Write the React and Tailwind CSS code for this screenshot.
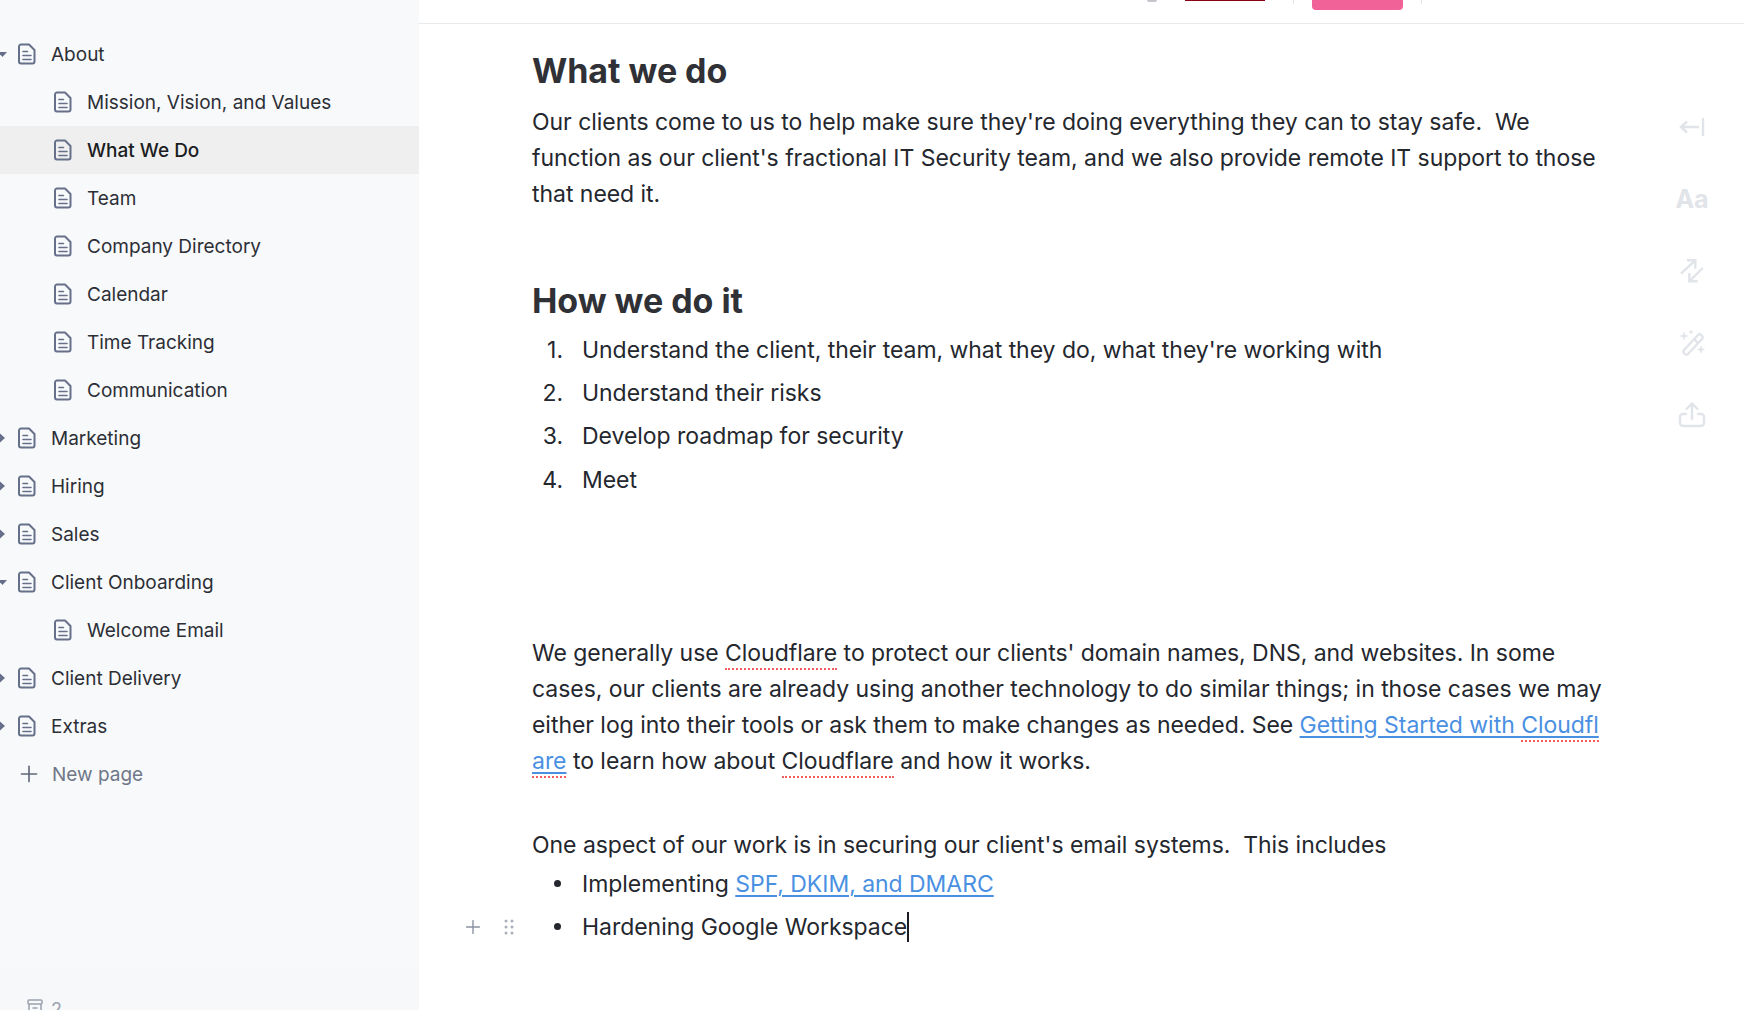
import React from 'react';
import { Plus } from 'lucide-react';

function DocIcon() {
  return (
    <svg width="18" height="22" viewBox="0 0 18 22" fill="none" stroke="#66708a" strokeWidth="2" strokeLinejoin="round" strokeLinecap="round" className="shrink-0">
      <path d="M3 1.5h8l5.5 5.5v11.5a2 2 0 0 1-2 2H3a2 2 0 0 1-2-2v-15a2 2 0 0 1 2-2z" />
      <path d="M5 8.5h4.5M5 12.5h8M5 16.5h8" strokeWidth="1.6" />
    </svg>
  );
}

function Caret({ open }) {
  return (
    <svg width="8" height="10" viewBox="0 0 8 10" className="absolute left-0 top-1/2 -translate-y-1/2" fill="#66708a">
      {open ? <path d="M-2 3h9L2.5 8z" /> : <path d="M0 0.5L5 5 0 9.5z" />}
    </svg>
  );
}

const pages = [
  { label: 'About', caret: 'open' },
  { label: 'Mission, Vision, and Values', child: true },
  { label: 'What We Do', child: true, active: true },
  { label: 'Team', child: true },
  { label: 'Company Directory', child: true },
  { label: 'Calendar', child: true },
  { label: 'Time Tracking', child: true },
  { label: 'Communication', child: true },
  { label: 'Marketing', caret: 'closed' },
  { label: 'Hiring', caret: 'closed' },
  { label: 'Sales', caret: 'closed' },
  { label: 'Client Onboarding', caret: 'open' },
  { label: 'Welcome Email', child: true },
  { label: 'Client Delivery', caret: 'closed' },
  { label: 'Extras', caret: 'closed' },
];

function Sidebar() {
  return (
    <aside className="w-[419px] shrink-0 h-full bg-[#f8f9fb] flex flex-col overflow-hidden">
      <nav className="pt-[30px] flex-1">
        {pages.map((p) => (
          <div
            key={p.label}
            className={`relative h-12 flex items-center gap-[15px] text-[19px] ${p.child ? 'pl-[54px]' : 'pl-[18px]'} ${p.active ? 'bg-[#efefef] text-[#1b1d22] font-medium' : 'text-[#2c2f36]'}`}
          >
            {p.caret && <Caret open={p.caret === 'open'} />}
            <DocIcon />
            <span className="pt-[2px]">{p.label}</span>
          </div>
        ))}
        <div className="h-12 flex items-center pl-[16px] gap-[10px] text-[19px] text-[#6f7787]">
          <Plus size={26} strokeWidth={1.5} className="text-[#5f6779] shrink-0" />
          <span className="pt-[2px]">New page</span>
        </div>
      </nav>
      <footer className="h-[43px] shrink-0 bg-[#f7f8fa] pt-[31px] pl-[27px] flex items-start gap-2 text-[18px] leading-[24px] text-[#9aa1ae]">
        <svg width="16" height="18" viewBox="0 0 16 18" fill="none" stroke="#9aa1ae" strokeWidth="1.5" className="mt-[1px]">
          <rect x="1" y="1" width="14" height="4" rx="1" />
          <path d="M2 5v10h12V5M5.5 9h5" />
        </svg>
        <span>2</span>
      </footer>
    </aside>
  );
}

function TopBar() {
  return (
    <header className="h-6 shrink-0 border-b border-[#e8ebed] flex items-start">
      <div className="ml-[728px] w-[10px] h-[2px] rounded-b-full bg-[#c4c6cb]" />
      <div className="ml-[28px] w-[80px] h-[1px] bg-[#8b0015]" />
      <div className="ml-[28px] w-[1px] h-1 bg-[#e2e4ea]" />
      <div className="ml-[18px] w-[91px] h-[10px] rounded-b-[4px] bg-[#f06298]" />
      <div className="ml-[18px] w-[1px] h-1 bg-[#e2e4ea]" />
    </header>
  );
}

function Squiggle({ children }) {
  return <span className="border-b-2 border-dotted border-[#f25c5c] pb-[1px]">{children}</span>;
}

function Doc() {
  const link = 'text-[#4a90e2] underline decoration-2 underline-offset-[3px]';
  return (
    <article className="flex-1 min-w-0 pl-[113px] pr-[34px] font-['Inter',sans-serif] text-[23px] leading-[36px] tracking-[-0.04px] text-[#24272e] relative">
      <h1 className="mt-[25px] text-[34px] leading-[44px] font-bold text-[#2f3136]">What we do</h1>
      <p className="mt-[11px]">
        Our clients come to us to help make sure they're doing everything they can to stay safe.&nbsp; We function as our client's fractional IT Security team, and we also provide remote IT support to those that need it.
      </p>
      <h2 className="mt-[67px] text-[34px] leading-[44px] font-bold text-[#2f3136]">How we do it</h2>
      <ol className="mt-[5px]">
        {["Understand the client, their team, what they do, what they're working with", 'Understand their risks', 'Develop roadmap for security', 'Meet'].map((t, i) => (
          <li key={t} className="flex h-[43.4px] items-center">
            <span className="w-[50px] pr-[19px] text-right shrink-0">{i + 1}.</span>
            <span>{t}</span>
          </li>
        ))}
      </ol>
      <p className="mt-[133px]">
        We generally use <Squiggle>Cloudflare</Squiggle> to protect our clients' domain names, DNS, and websites. In some cases, our clients are already using another technology to do similar things; in those cases we may either log into their tools or ask them to make changes as needed. See{' '}
        <a className={`${link} break-all`}>Getting Started with <Squiggle>Cloudflare</Squiggle></a> to learn how about <Squiggle>Cloudflare</Squiggle> and how it works.
      </p>
      <p className="mt-[48px]">One aspect of our work is in securing our client's email systems.&nbsp; This includes</p>
      <ul>
        <li className="flex h-[42.5px] items-center">
          <span className="w-[50px] flex justify-center shrink-0"><span className="w-[7px] h-[7px] rounded-full bg-[#24272e]" /></span>
          <span>Implementing <a className={link}>SPF, DKIM, and DMARC</a></span>
        </li>
        <li className="relative flex h-[43.4px] items-center">
          <div className="absolute left-[-70px] top-1/2 -translate-y-1/2 flex items-center gap-[20px] text-[#8a91a0]">
            <Plus size={22} strokeWidth={1.5} />
            <svg width="10" height="16" viewBox="0 0 10 16" fill="#a9afbb">
              <circle cx="2" cy="2" r="1.5" /><circle cx="8" cy="2" r="1.5" />
              <circle cx="2" cy="8" r="1.5" /><circle cx="8" cy="8" r="1.5" />
              <circle cx="2" cy="14" r="1.5" /><circle cx="8" cy="14" r="1.5" />
            </svg>
          </div>
          <span className="w-[50px] flex justify-center shrink-0"><span className="w-[7px] h-[7px] rounded-full bg-[#24272e]" /></span>
          <span className="border-r-2 border-[#1b1d22] leading-[30px]">Hardening Google Workspace</span>
        </li>
      </ul>
    </article>
  );
}

function Rail() {
  const c = '#e1e4e9';
  return (
    <div className="w-[106px] shrink-0 flex flex-col items-center pt-[89px] pl-[2px] gap-[44px] text-[#e1e4e9]">
      <svg width="28" height="28" viewBox="0 0 28 28" fill="none" stroke={c} strokeWidth="2.4">
        <path d="M25 5v18M21 14H3M9 8.5L3 14l6 5.5" />
      </svg>
      <div className="h-7 flex items-center font-['Inter',sans-serif] text-[25px] font-bold leading-none">Aa</div>
      <svg width="28" height="28" viewBox="0 0 28 28" fill="none" stroke={c} strokeWidth="2.4">
        <path d="M3 16.7L17.3 3.3M9 3.3h8.300v8.400M24.700 11L11.300 24.300M11.300 16v8.300h8.400" />
      </svg>
      <svg width="28" height="28" viewBox="0 0 28 28" fill="none" stroke={c} strokeWidth="2.4" strokeLinejoin="round">
        <path d="M6 21L20 6a2 2 0 0 1 3 0l1 1a2 2 0 0 1 0 3L10 25a2 2 0 0 1-3 0l-1-1a2 2 0 0 1 0-3z" />
        <path d="M16 10l4 4" />
        <path d="M6 3l1 3 3 1-3 1-1 3-1-3-3-1 3-1zM13 1l.6 1.400L15 3l-1.400.6L13 5l-.6-1.400L11 3l1.400-.6zM23 17l1 2.500 2.500 1-2.500 1-1 2.500-1-2.500-2.500-1 2.500-1z" fill={c} strokeWidth="0.5" />
      </svg>
      <svg width="28" height="28" viewBox="0 0 28 28" fill="none" stroke={c} strokeWidth="2.4" strokeLinecap="round">
        <path d="M8 13H5a3 3 0 0 0-3 3v6a3 3 0 0 0 3 3h18a3 3 0 0 0 3-3v-6a3 3 0 0 0-3-3h-3" />
        <path d="M14 18V3M8.500 8L14 2.500 19.500 8" />
      </svg>
    </div>
  );
}

export default function App() {
  return (
    <div className="w-[1744px] h-[1010px] flex overflow-hidden bg-white font-['Inter',sans-serif]">
      <Sidebar />
      <main className="flex-1 min-w-0 flex flex-col">
        <TopBar />
        <div className="flex flex-1 min-h-0">
          <Doc />
          <Rail />
        </div>
      </main>
    </div>
  );
}
